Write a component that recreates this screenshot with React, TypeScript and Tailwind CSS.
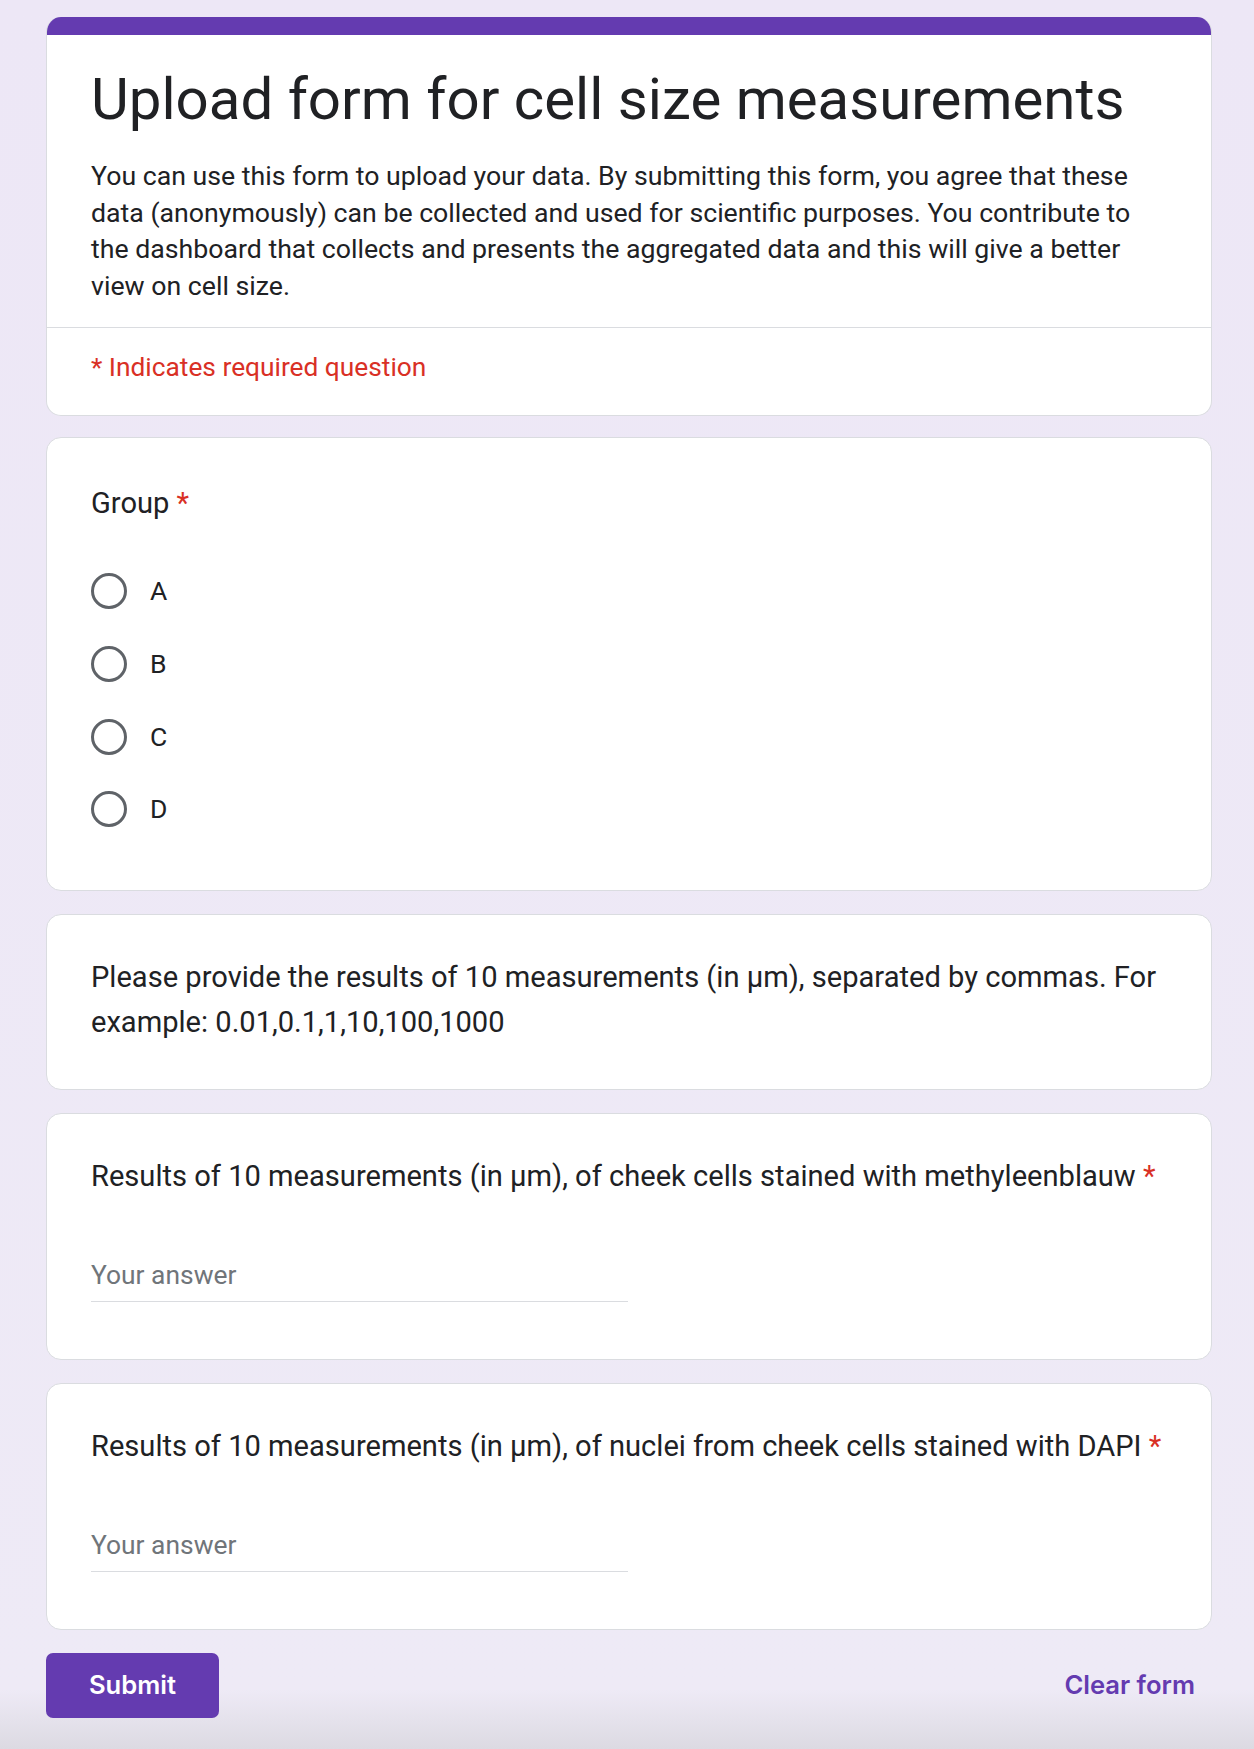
export default function App() {
  const options = ["A", "B", "C", "D"];

  return (
    <div className="min-h-[1749px] bg-[linear-gradient(to_bottom,#ede7f6_0px,#eeeaf6_1690px,#dcdae2_1749px)] pt-[17px] font-['Roboto',sans-serif] text-[#202124]">
      <div className="ml-[46px] w-[1166px] flex flex-col gap-[23px]">
        {/* HEADER CARD */}
        <div className="-mb-[2px] bg-white rounded-[15px] border border-t-0 border-[#dadce0] overflow-hidden">
          <div className="h-[18px] bg-[#643bb0]"></div>
          <div className="px-[44px] pt-[28px] pb-[22.5px]">
            <h1 className="text-[58.2px] leading-[73px] font-normal">
              Upload form for cell size measurements
            </h1>
            <p className="mt-[22px] text-[26.7px] leading-[36.5px] whitespace-nowrap">
              You can use this form to upload your data. By submitting this form, you agree that these
              <br />
              data (anonymously) can be collected and used for scientific purposes. You contribute to
              <br />
              the dashboard that collects and presents the aggregated data and this will give a better
              <br />
              view on cell size.
            </p>
          </div>
          <div className="border-t border-[#dadce0] px-[44px] pt-[21px] pb-[30px]">
            <p className="text-[26.3px] leading-[36.6px] text-[#d93025]">
              * Indicates required question
            </p>
          </div>
        </div>

        {/* GROUP */}
        <div className="bg-white rounded-[15px] border border-[#dadce0] px-[44px] pt-[43px] pb-[45px]">
          <p className="text-[29.1px] leading-[44px]">
            Group <span className="text-[#d93025]">*</span>
          </p>
          <div className="mt-[30px] flex flex-col">
            {options.map((o) => (
              <div key={o} className="h-[72.6px] flex items-center gap-[23px]">
                <span className="w-[36px] h-[36px] rounded-full border-[3.5px] border-[#5f6368]"></span>
                <span className="text-[26.5px] leading-[36px]">{o}</span>
              </div>
            ))}
          </div>
        </div>

        {/* INFO */}
        <div className="bg-white rounded-[15px] border border-[#dadce0] px-[44px] pt-[40px] pb-[44px]">
          <p className="text-[29.1px] leading-[45px] whitespace-nowrap">
            Please provide the results of 10 measurements (in µm), separated by commas. For
            <br />
            example: 0.01,0.1,1,10,100,1000
          </p>
        </div>

        {/* QUESTION 1 */}
        <div className="bg-white rounded-[15px] border border-[#dadce0] pl-[44px] pr-[30px] pt-[40px] pb-[57px]">
          <p className="text-[29.1px] leading-[44px]">
            Results of 10 measurements (in µm), of cheek cells stained with methyleenblauw{" "}
            <span className="text-[#d93025]">*</span>
          </p>
          <div className="mt-[59px] w-[537px] border-b-[1.5px] border-[#dadce0] pb-[7px]">
            <p className="text-[26.4px] leading-[36.6px] text-[#70757a]">Your answer</p>
          </div>
        </div>

        {/* QUESTION 2 */}
        <div className="bg-white rounded-[15px] border border-[#dadce0] pl-[44px] pr-[30px] pt-[40px] pb-[57px]">
          <p className="text-[29.1px] leading-[44px]">
            Results of 10 measurements (in µm), of nuclei from cheek cells stained with DAPI{" "}
            <span className="text-[#d93025]">*</span>
          </p>
          <div className="mt-[59px] w-[537px] border-b-[1.5px] border-[#dadce0] pb-[7px]">
            <p className="text-[26.4px] leading-[36.6px] text-[#70757a]">Your answer</p>
          </div>
        </div>

        {/* ACTIONS */}
        <div className="flex items-center justify-between">
          <button className="w-[173px] h-[65px] rounded-[7px] bg-[#643bb0] text-white font-['Inter',sans-serif] font-semibold text-[25.6px]">
            Submit
          </button>
          <button className="mr-[17px] text-[#643bb0] font-['Inter',sans-serif] font-semibold text-[25.6px]">
            Clear form
          </button>
        </div>
      </div>
    </div>
  );
}
